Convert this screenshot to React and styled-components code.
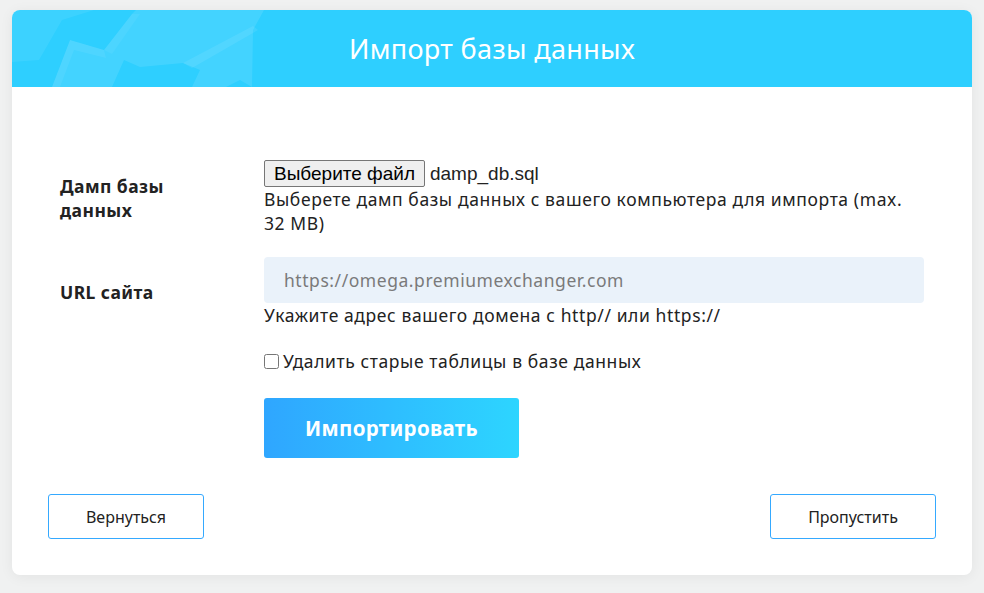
import React from "react";
import styled, { createGlobalStyle } from "styled-components";

const GlobalStyle = createGlobalStyle`
  html, body {
    margin: 0;
    padding: 0;
    background: #f0f1f1;
  }
  body {
    font-family: "Noto Sans", "Open Sans", sans-serif;
    color: #222;
  }
`;

function HeaderPattern() {
  return (
    <svg width="260" height="77" viewBox="0 0 260 77">
      <g fill="#ffffff">
        <polygon points="0,0 82,0 50,10 27,50 0,52" opacity="0.07" />
        <polygon
          points="40,77 58,30 92,40 120,4 124,0 252,0 241,20 240,77 228,70 214,77 180,77 188,60 171,53 128,57 112,50 100,77"
          opacity="0.1"
        />
        <polygon points="40,77 58,30 92,40 94,48 62,40 48,77" opacity="0.06" />
        <polygon points="171,53 241,16 246,20 180,58" opacity="0.08" />
        <polygon points="92,40 120,4 128,4 100,44" opacity="0.05" />
      </g>
    </svg>
  );
}

function App() {
  return (
    <>
      <GlobalStyle />
      <Page>
        <Card>
          <Header>
            <Pattern>
              <HeaderPattern />
            </Pattern>
            <Title>Импорт базы данных</Title>
          </Header>
          <Body>
            <Row>
              <Label>Дамп базы данных</Label>
              <Field>
                <FileLine>
                  <FileButton type="button">Выберите файл</FileButton>
                  <FileName>damp_db.sql</FileName>
                </FileLine>
                <Hint>
                  Выберете дамп базы данных с вашего компьютера для импорта (max.
                  32 MB)
                </Hint>
              </Field>
            </Row>
            <Row $gap={22}>
              <Label>URL сайта</Label>
              <Field>
                <TextInput placeholder="https://omega.premiumexchanger.com" />
                <Hint>Укажите адрес вашего домена с http// или https://</Hint>
              </Field>
            </Row>
            <Row $gap={22}>
              <span />
              <CheckLabel>
                <input type="checkbox" />
                Удалить старые таблицы в базе данных
              </CheckLabel>
            </Row>
            <Row $gap={25}>
              <span />
              <div>
                <ImportButton type="button">Импортировать</ImportButton>
              </div>
            </Row>
            <Footer>
              <OutlineButton type="button">Вернуться</OutlineButton>
              <OutlineButton type="button" $wide>
                Пропустить
              </OutlineButton>
            </Footer>
          </Body>
        </Card>
      </Page>
    </>
  );
}

export default App;

const Page = styled.div`
  padding: 10px 12px 18px 12px;
`;

const Card = styled.div`
  width: 960px;
  background: #ffffff;
  border-radius: 8px;
  overflow: hidden;
  box-shadow: 0 2px 14px rgba(0, 0, 0, 0.06);
`;

const Header = styled.div`
  position: relative;
  height: 77px;
  background: #2ecfff;
  display: flex;
  align-items: center;
  justify-content: center;
`;

const Pattern = styled.div`
  position: absolute;
  left: 0;
  top: 0;
  line-height: 0;
`;

const Title = styled.h1`
  position: relative;
  margin: 0;
  color: #ffffff;
  font-size: 27px;
  font-weight: 400;
  letter-spacing: 0.35px;
`;

const Body = styled.div`
  padding: 73px 36px 36px 36px;
`;

const Row = styled.div`
  display: grid;
  grid-template-columns: 216px 660px;
  align-items: center;
  margin-top: ${(p) => p.$gap || 0}px;
`;

const Label = styled.div`
  padding-left: 12px;
  max-width: 120px;
  font-size: 17.5px;
  font-weight: 700;
  letter-spacing: 0.45px;
  line-height: 24px;
  color: #222;
`;

const Field = styled.div`
  display: flex;
  flex-direction: column;
`;

const FileLine = styled.div`
  display: flex;
  align-items: center;
  gap: 5px;
`;

const FileButton = styled.button`
  height: 27px;
  padding: 0 9px;
  background: #efefef;
  border: 1px solid #767676;
  border-radius: 2px;
  font-family: "Liberation Sans", Arial, sans-serif;
  font-size: 19px;
  color: #000;
`;

const FileName = styled.span`
  font-family: "Liberation Sans", Arial, sans-serif;
  font-size: 19px;
  color: #222;
`;

const Hint = styled.div`
  font-size: 17.5px;
  letter-spacing: 0.6px;
  line-height: 24px;
  color: #222;
`;

const TextInput = styled.input`
  box-sizing: border-box;
  width: 660px;
  height: 46px;
  padding: 0 20px;
  border: none;
  border-radius: 4px;
  background: #eaf2fa;
  font-family: "Noto Sans", sans-serif;
  font-size: 17.5px;
  letter-spacing: 0.55px;
  color: #222;
  outline: none;

  &::placeholder {
    color: #7a7a7a;
  }
`;

const CheckLabel = styled.label`
  display: flex;
  align-items: center;
  gap: 4px;
  font-size: 17.5px;
  letter-spacing: 0.6px;
  line-height: 24px;
  color: #222;

  input {
    margin: 0;
    width: 15px;
    height: 15px;
  }
`;

const ImportButton = styled.button`
  width: 255px;
  height: 60px;
  border: none;
  border-radius: 3px;
  background: linear-gradient(90deg, #2fa6ff 0%, #2dd5ff 100%);
  color: #ffffff;
  font-family: "Noto Sans", sans-serif;
  font-size: 20.5px;
  letter-spacing: 0.3px;
  font-weight: 700;
  cursor: pointer;
`;

const Footer = styled.div`
  display: flex;
  justify-content: space-between;
  margin-top: 36px;
`;

const OutlineButton = styled.button`
  width: ${(p) => (p.$wide ? 166 : 156)}px;
  height: 45px;
  background: #ffffff;
  border: 1px solid #35a9ff;
  border-radius: 3px;
  font-family: "Noto Sans", sans-serif;
  font-size: 16px;
  color: #222;
  cursor: pointer;
`;
